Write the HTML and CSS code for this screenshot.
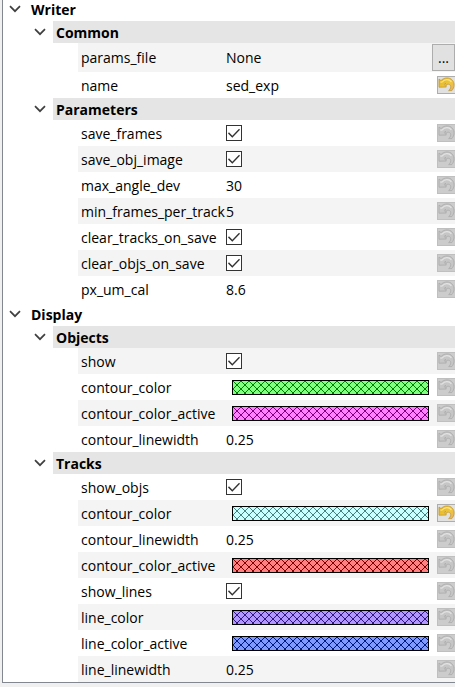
FILE: index.html
```html
<!DOCTYPE html>
<html lang="en">
<head>
<meta charset="utf-8">
<title>Parameters</title>
<link rel="stylesheet" href="styles.css">
</head>
<body>
<svg class="defs" aria-hidden="true">
  <defs>
    <linearGradient id="gold" x1="0" y1="0" x2="1" y2="1">
      <stop offset="0" stop-color="#e2b018"/><stop offset=".55" stop-color="#efc63c"/><stop offset="1" stop-color="#e6b070"/>
    </linearGradient>
    <pattern id="hatch" width="8" height="8" patternUnits="userSpaceOnUse">
      <path fill="currentColor" d="M0 0h1v1h-1zM1 1h1v1h-1zM2 2h1v1h-1zM3 3h1v1h-1zM4 4h1v1h-1zM5 5h1v1h-1zM6 6h1v1h-1zM7 7h1v1h-1zM7 0h1v1h-1zM6 1h1v1h-1zM5 2h1v1h-1zM4 3h1v1h-1zM3 4h1v1h-1zM2 5h1v1h-1zM1 6h1v1h-1zM0 7h1v1h-1z"/>
    </pattern>
    <symbol id="chevron" viewBox="0 0 12 8"><path d="M1 1.2L6 6.2L11 1.2" fill="none" stroke="#404040" stroke-width="1.7"/></symbol>
    <symbol id="undo" viewBox="0 0 17 16">
      <path class="arrow" d="M1 2L3 3.6C6 .2 11.6 0 14.4 3.2C16.8 6.2 16.6 10.4 13.8 13.6L10.6 13.6C13.2 11.6 13.2 8.6 11.6 7.6C10.2 6.8 8.8 7.2 8.2 8.6L7.4 6.2L6.4 7.6L8.4 10L1 10.2Z"/>
      <path class="shine" d="M2.4 5.2L4.2 5C6.6 1.8 11.2 1.8 13.4 4.8"/>
    </symbol>
  </defs>
</svg>
<main class="tree"></main>
<script src="tree.js"></script>
</body>
</html>
```
FILE: styles.css
```css
* {
  box-sizing: border-box;
}

body {
  margin: 0;
  padding-left: 2px;
  background: #f0f0f0;
  color: #000;
  font: 14px/20px "Open Sans", "Noto Sans", sans-serif;
  overflow: hidden;
}

.defs {
  position: absolute;
  width: 0;
  height: 0;
}

.tree {
  margin-top: -3px;
  border: 1px solid #828790;
  border-width: 0 0 1px 1px;
  background: #fff;
}

h2, h3 {
  display: flex;
  align-items: center;
  margin: 0;
  font-size: 14px;
  font-weight: 700;
}

h2 {
  height: 24px;
}

h3 {
  height: 22px;
  padding-left: 25px;
}

.toggle {
  display: flex;
  width: 25px;
  padding: 0 0 0 6px;
  border: 0;
  background: none;
}

.toggle svg {
  width: 12px;
  height: 8px;
}

h2 span {
  padding: 1px 0 0 3px;
}

h3 span {
  flex: 1;
  height: 22px;
  padding: 2px 0 0 3px;
  background: #e5e5e5;
}

.row {
  display: grid;
  grid-template-columns: 145px 1fr auto;
  align-items: start;
  height: 26px;
  margin-left: 75px;
  padding-left: 3px;
}

.row label,
.value {
  margin-top: 4px;
}

.row.tall {
  height: 29px;
}

.tall label,
.tall .value {
  margin-top: 5px;
}

.row.shaded {
  background: #f4f4f4;
}

.row label {
  white-space: nowrap;
}

.value {
  width: 100%;
  height: 20px;
  padding: 0;
  border: 0;
  background: none;
  color: inherit;
  font: inherit;
}

.check {
  appearance: none;
  display: grid;
  place-items: center;
  width: 16px;
  height: 16px;
  margin: 5px 0 0;
  border: 1px solid #333;
  background: #fff;
}

.check:checked::before {
  content: "";
  width: 12px;
  height: 12px;
  background: #333;
  clip-path: polygon(0 54%, 8% 44%, 36% 72%, 92% 14%, 100% 22%, 36% 90%);
}

.swatch {
  display: block;
  height: 15px;
  margin: 6px 8px 0 6px;
  padding: 0;
  border: 1px solid #000;
}

.swatch svg {
  display: block;
  width: 100%;
  height: 13px;
  shape-rendering: crispEdges;
}

.green { background: #80ff80; color: #007f00; }
.magenta { background: #ff80ff; color: #7f007f; }
.cyan { background: #c8ffff; color: #487f7f; }
.red { background: #ff8080; color: #7f0000; }
.purple { background: #b296ff; color: #32167f; }
.blue { background: #8099ff; color: #00197f; }

/* The colours are properties so that they reach the shapes inside <use>. */
.reset {
  --fill: url(#gold);
  --line: #c4982c;
  --shine: #fbe88c;
  display: block;
  width: 18px;
  height: 18px;
  margin-top: 4px;
  padding: 0;
  border: 1px solid #adadad;
  border-right: 0;
  background: #e1e1e1;
}

.reset:disabled {
  --fill: #c6c6c6;
  --line: #aaa;
  --shine: #e4e4e4;
  border-color: #bfbfbf;
  background: #ccc;
}

.reset svg {
  display: block;
  width: 17px;
  height: 16px;
}

.arrow {
  fill: var(--fill);
  stroke: var(--line);
  stroke-width: 0.8;
}

.shine {
  fill: none;
  stroke: var(--shine);
  stroke-width: 1.2;
}

.browse {
  width: 23px;
  height: 27px;
  margin-top: 1px;
  padding: 0;
  border: 1px solid #adadad;
  background: #e1e1e1;
  color: #000;
  font: inherit;
}
```
FILE: tree.js
```js
const sections = [
  ["Writer", [
    ["Common", true, [["params_file", "None", "browse"], ["name", "sed_exp", "changed"]]],
    ["Parameters", false, [["save_frames", true], ["save_obj_image", true], ["max_angle_dev", "30"],
      ["min_frames_per_track", "5"], ["clear_tracks_on_save", true], ["clear_objs_on_save", true], ["px_um_cal", "8.6"]]]
  ]],
  ["Display", [
    ["Objects", true, [["show", true], ["contour_color", "#green"], ["contour_color_active", "#magenta"], ["contour_linewidth", "0.25"]]],
    ["Tracks", false, [["show_objs", true], ["contour_color", "#cyan", "changed"], ["contour_linewidth", "0.25"],
      ["contour_color_active", "#red"], ["show_lines", true], ["line_color", "#purple"], ["line_color_active", "#blue"], ["line_linewidth", "0.25"]]]
  ]]
];

const heading = (tag, text) =>
  `<${tag}><button class="toggle" aria-label="Toggle ${text}"><svg><use href="#chevron"/></svg></button><span>${text}</span></${tag}>`;

function editor(id, value) {
  if (value === true) return `<input class="check" type="checkbox" id="${id}" checked>`;
  if (value[0] === "#") {
    return `<button class="swatch ${value.slice(1)}" id="${id}"><svg><rect width="100%" height="13" fill="url(#hatch-${value.slice(1)})"/></svg></button>`;
  }
  return `<input class="value" type="text" id="${id}" value="${value}">`;
}

function action(name, kind) {
  if (kind === "browse") return `<button class="browse" aria-label="Browse ${name}">...</button>`;
  return `<button class="reset" aria-label="Reset ${name}"${kind === "changed" ? "" : " disabled"}><svg><use href="#undo"/></svg></button>`;
}

// Pattern contents take their colour from the pattern itself, so each swatch gets its own copy.
const hatch = document.getElementById("hatch");
for (const name of ["green", "magenta", "cyan", "red", "purple", "blue"]) {
  const copy = hatch.cloneNode(true);
  copy.id = "hatch-" + name;
  copy.setAttribute("class", name);
  hatch.after(copy);
}

document.querySelector(".tree").innerHTML = sections.map(([title, groups]) =>
  heading("h2", title) + groups.map(([group, shadedFirst, rows]) =>
    heading("h3", group) + rows.map(([name, value, kind], i) => {
      const id = `${group}-${name}`;
      const shaded = (i % 2 === 0) === shadedFirst;
      return `<div class="row${shaded ? " shaded" : ""}${kind === "browse" ? " tall" : ""}">` +
        `<label for="${id}">${name}</label>${editor(id, value)}${action(name, kind)}</div>`;
    }).join("")
  ).join("")
).join("");
```
